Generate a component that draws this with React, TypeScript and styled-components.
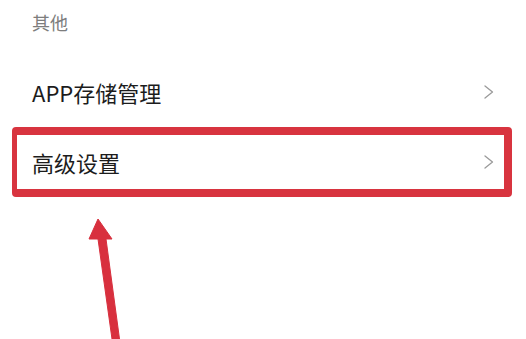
import React from "react";
import styled, { createGlobalStyle } from "styled-components";

const GlobalStyle = createGlobalStyle`
  html, body {
    margin: 0;
    padding: 0;
    background: #ffffff;
    overflow: hidden;
  }
  body {
    font-family: "Noto Sans CJK SC", "Noto Sans", sans-serif;
  }
`;

const Page = styled.div`
  position: relative;
  width: 526px;
  height: 339px;
  background: #ffffff;
`;

const SectionTitle = styled.div`
  height: 44px;
  padding-left: 32px;
  display: flex;
  align-items: center;
  font-size: 18px;
  color: #7d7d7d;
  margin-top: 0;
`;

const List = styled.div`
  display: flex;
  flex-direction: column;
  padding: 13px 14px 0 12px;
`;

const Row = styled.div<{ $highlighted?: boolean }>`
  box-sizing: border-box;
  height: 70px;
  display: flex;
  align-items: center;
  justify-content: space-between;
  padding: 0 10px 0 15px;
  border: 8px solid ${(p) => (p.$highlighted ? "#d8343f" : "transparent")};
  border-left-width: 5px;
  border-radius: 4px;
`;

const Label = styled.span`
  font-size: 22px;
  color: #1c1c1c;
  line-height: 1;
`;

const Chevron = () => (
  <svg width="10" height="14" viewBox="0 0 10 14" fill="none">
    <path d="M1 1 L8.5 7 L1 13" stroke="#9a9a9a" strokeWidth="1.3" strokeLinecap="round" strokeLinejoin="round" />
  </svg>
);

const ArrowWrap = styled.div`
  position: absolute;
  left: 80px;
  top: 212px;
  width: 50px;
  height: 127px;
`;

const Arrow = () => (
  <ArrowWrap>
    <svg width="50" height="127" viewBox="0 0 50 127">
      <polygon
        points="18,7 32,27 26,27 39.5,127 32,127 18,27 9,27"
        fill="#d8303e"
        stroke="#d8303e"
        strokeWidth="1"
        strokeLinejoin="round"
      />
    </svg>
  </ArrowWrap>
);

const items = [
  { label: "APP存储管理", highlighted: false },
  { label: "高级设置", highlighted: true },
];

export default function App() {
  return (
    <>
      <GlobalStyle />
      <Page>
        <SectionTitle>其他</SectionTitle>
        <List>
          {items.map((item) => (
            <Row key={item.label} $highlighted={item.highlighted}>
              <Label>{item.label}</Label>
              <Chevron />
            </Row>
          ))}
        </List>
        <Arrow />
      </Page>
    </>
  );
}
